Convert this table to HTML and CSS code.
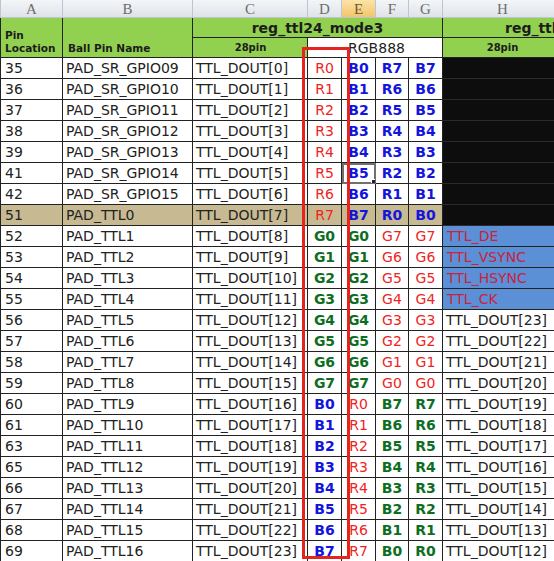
FILE: index.html
```html
<!DOCTYPE html>
<html>
<head>
<meta charset="utf-8">
<link rel="stylesheet" href="styles.css">
</head>
<body>
<div class="wrap">
<table class="sheet">
<colgroup>
<col class="c-a"><col class="c-b"><col class="c-c"><col class="c-n"><col class="c-n"><col class="c-f"><col class="c-n"><col class="c-h">
</colgroup>
<tr class="letters">
<th>A</th><th>B</th><th>C</th><th>D</th><th class="active">E</th><th>F</th><th>G</th><th>H</th>
</tr>
<tr class="hd1">
<td rowspan="2" class="g pinloc">Pin<br>Location</td>
<td rowspan="2" class="g ballpin">Ball Pin Name</td>
<td colspan="5" class="g title">reg_ttl24_mode3</td>
<td class="g title2">reg_ttl24_mode4</td>
</tr>
<tr class="hd2">
<td class="g pin28">28pin</td>
<td colspan="4" class="rgb">RGB888</td>
<td class="g pin28">28pin</td>
</tr>
<tr><td>35</td><td>PAD_SR_GPIO09</td><td>TTL_DOUT[0]</td><td class="v r">R0</td><td class="v b">B0</td><td class="v b">R7</td><td class="v b">B7</td><td class="blk"></td></tr>
<tr><td>36</td><td>PAD_SR_GPIO10</td><td>TTL_DOUT[1]</td><td class="v r">R1</td><td class="v b">B1</td><td class="v b">R6</td><td class="v b">B6</td><td class="blk"></td></tr>
<tr><td>37</td><td>PAD_SR_GPIO11</td><td>TTL_DOUT[2]</td><td class="v r">R2</td><td class="v b">B2</td><td class="v b">R5</td><td class="v b">B5</td><td class="blk"></td></tr>
<tr><td>38</td><td>PAD_SR_GPIO12</td><td>TTL_DOUT[3]</td><td class="v r">R3</td><td class="v b">B3</td><td class="v b">R4</td><td class="v b">B4</td><td class="blk"></td></tr>
<tr><td>39</td><td>PAD_SR_GPIO13</td><td>TTL_DOUT[4]</td><td class="v r">R4</td><td class="v b">B4</td><td class="v b">R3</td><td class="v b">B3</td><td class="blk"></td></tr>
<tr><td>41</td><td>PAD_SR_GPIO14</td><td>TTL_DOUT[5]</td><td class="v r">R5</td><td class="v b sel">B5</td><td class="v b">R2</td><td class="v b">B2</td><td class="blk"></td></tr>
<tr><td>42</td><td>PAD_SR_GPIO15</td><td>TTL_DOUT[6]</td><td class="v r">R6</td><td class="v b">B6</td><td class="v b">R1</td><td class="v b">B1</td><td class="blk"></td></tr>
<tr class="tan"><td>51</td><td>PAD_TTL0</td><td>TTL_DOUT[7]</td><td class="v r">R7</td><td class="v b">B7</td><td class="v b">R0</td><td class="v b">B0</td><td class="blk"></td></tr>
<tr><td>52</td><td>PAD_TTL1</td><td>TTL_DOUT[8]</td><td class="v gr">G0</td><td class="v gr">G0</td><td class="v r">G7</td><td class="v r">G7</td><td class="blu">TTL_DE</td></tr>
<tr><td>53</td><td>PAD_TTL2</td><td>TTL_DOUT[9]</td><td class="v gr">G1</td><td class="v gr">G1</td><td class="v r">G6</td><td class="v r">G6</td><td class="blu">TTL_VSYNC</td></tr>
<tr><td>54</td><td>PAD_TTL3</td><td>TTL_DOUT[10]</td><td class="v gr">G2</td><td class="v gr">G2</td><td class="v r">G5</td><td class="v r">G5</td><td class="blu">TTL_HSYNC</td></tr>
<tr><td>55</td><td>PAD_TTL4</td><td>TTL_DOUT[11]</td><td class="v gr">G3</td><td class="v gr">G3</td><td class="v r">G4</td><td class="v r">G4</td><td class="blu">TTL_CK</td></tr>
<tr><td>56</td><td>PAD_TTL5</td><td>TTL_DOUT[12]</td><td class="v gr">G4</td><td class="v gr">G4</td><td class="v r">G3</td><td class="v r">G3</td><td>TTL_DOUT[23]</td></tr>
<tr><td>57</td><td>PAD_TTL6</td><td>TTL_DOUT[13]</td><td class="v gr">G5</td><td class="v gr">G5</td><td class="v r">G2</td><td class="v r">G2</td><td>TTL_DOUT[22]</td></tr>
<tr><td>58</td><td>PAD_TTL7</td><td>TTL_DOUT[14]</td><td class="v gr">G6</td><td class="v gr">G6</td><td class="v r">G1</td><td class="v r">G1</td><td>TTL_DOUT[21]</td></tr>
<tr><td>59</td><td>PAD_TTL8</td><td>TTL_DOUT[15]</td><td class="v gr">G7</td><td class="v gr">G7</td><td class="v r">G0</td><td class="v r">G0</td><td>TTL_DOUT[20]</td></tr>
<tr><td>60</td><td>PAD_TTL9</td><td>TTL_DOUT[16]</td><td class="v b">B0</td><td class="v r">R0</td><td class="v gr">B7</td><td class="v gr">R7</td><td>TTL_DOUT[19]</td></tr>
<tr><td>61</td><td>PAD_TTL10</td><td>TTL_DOUT[17]</td><td class="v b">B1</td><td class="v r">R1</td><td class="v gr">B6</td><td class="v gr">R6</td><td>TTL_DOUT[18]</td></tr>
<tr><td>63</td><td>PAD_TTL11</td><td>TTL_DOUT[18]</td><td class="v b">B2</td><td class="v r">R2</td><td class="v gr">B5</td><td class="v gr">R5</td><td>TTL_DOUT[17]</td></tr>
<tr><td>65</td><td>PAD_TTL12</td><td>TTL_DOUT[19]</td><td class="v b">B3</td><td class="v r">R3</td><td class="v gr">B4</td><td class="v gr">R4</td><td>TTL_DOUT[16]</td></tr>
<tr><td>66</td><td>PAD_TTL13</td><td>TTL_DOUT[20]</td><td class="v b">B4</td><td class="v r">R4</td><td class="v gr">B3</td><td class="v gr">R3</td><td>TTL_DOUT[15]</td></tr>
<tr><td>67</td><td>PAD_TTL14</td><td>TTL_DOUT[21]</td><td class="v b">B5</td><td class="v r">R5</td><td class="v gr">B2</td><td class="v gr">R2</td><td>TTL_DOUT[14]</td></tr>
<tr><td>68</td><td>PAD_TTL15</td><td>TTL_DOUT[22]</td><td class="v b">B6</td><td class="v r">R6</td><td class="v gr">B1</td><td class="v gr">R1</td><td>TTL_DOUT[13]</td></tr>
<tr><td>69</td><td>PAD_TTL16</td><td>TTL_DOUT[23]</td><td class="v b">B7</td><td class="v r">R7</td><td class="v gr">B0</td><td class="v gr">R0</td><td>TTL_DOUT[12]</td></tr>
</table>
<div class="redbox"></div>
</div>
</body>
</html>
```
FILE: styles.css
```css
html, body {
  margin: 0;
  padding: 0;
  background: #fff;
}
body {
  width: 554px;
  height: 561px;
  overflow: hidden;
  font-family: "DejaVu Sans", Verdana, sans-serif;
}
.wrap {
  position: relative;
  width: 554px;
  height: 561px;
  overflow: hidden;
}
.sheet {
  border-collapse: collapse;
  table-layout: fixed;
  width: 562px;
}
.c-a { width: 62px; }
.c-b { width: 130px; }
.c-c { width: 115px; }
.c-n { width: 34px; }
.c-f { width: 33px; }
.c-h { width: 120px; }

.sheet td {
  border: 1px solid #222;
  height: 20px;
  padding: 0 3px;
  font-size: 14px;
  color: #222;
  white-space: nowrap;
  overflow: hidden;
  vertical-align: middle;
  line-height: 18px;
}
.sheet tr > td:first-child { padding-left: 4px; }

.letters th {
  height: 17px;
  padding: 0;
  font-family: "Liberation Serif", "DejaVu Serif", serif;
  font-weight: normal;
  font-size: 15px;
  line-height: 16px;
  color: #6e6e6e;
  background: linear-gradient(#f3f5f8, #dfe3e9);
  border: 1px solid #bcc6d2;
  border-top: none;
}
.letters th.active {
  background: linear-gradient(#fbe3a8, #f3c56a);
  color: #6a5a40;
}

.sheet td.g {
  background: #92d050;
  color: #1c1c1c;
  font-weight: bold;
}
.hd1 td { height: 18px; }
.hd2 td { height: 19px; }
.sheet td.pinloc {
  font-size: 10.5px;
  line-height: 13px;
  vertical-align: bottom;
  padding: 0 0 2px 4px;
}
.sheet td.ballpin {
  font-size: 10.5px;
  line-height: 13px;
  vertical-align: bottom;
  padding: 0 0 2px 5px;
}
.sheet td.title {
  text-align: center;
  font-size: 14px;
  padding-top: 1px;
}
.sheet td.title2 {
  font-size: 14px;
  padding-left: 62px;
  text-align: left;
}
.sheet td.pin28 {
  text-align: center;
  font-size: 10px;
}
.sheet td.rgb {
  text-align: center;
  font-size: 14px;
  padding-left: 6px;
}

.sheet td.v {
  text-align: center;
  padding: 0;
}
.sheet td.r { color: #ee2424; }
.sheet td.b { color: #1414dc; font-weight: bold; }
.sheet td.gr { color: #0d6e22; font-weight: bold; }

.tan td { background: #c7ba92; }
.sheet td.blk { background: #0d0d0d; border-color: #2a2a2a; }
.sheet td.blu {
  background: #5b8fd6;
  color: #c8243f;
  padding-left: 4px;
}

.sheet td.sel {
  position: relative;
  outline: 2px solid #707070;
  outline-offset: -2px;
}
.sheet td.sel::after {
  content: "";
  position: absolute;
  right: -3px;
  bottom: -3px;
  width: 5px;
  height: 5px;
  background: #222;
  border: 1px solid #fff;
}

.redbox {
  position: absolute;
  left: 302px;
  top: 47px;
  width: 48px;
  height: 512px;
  border: 3px solid #e6231c;
  box-sizing: border-box;
}
```
